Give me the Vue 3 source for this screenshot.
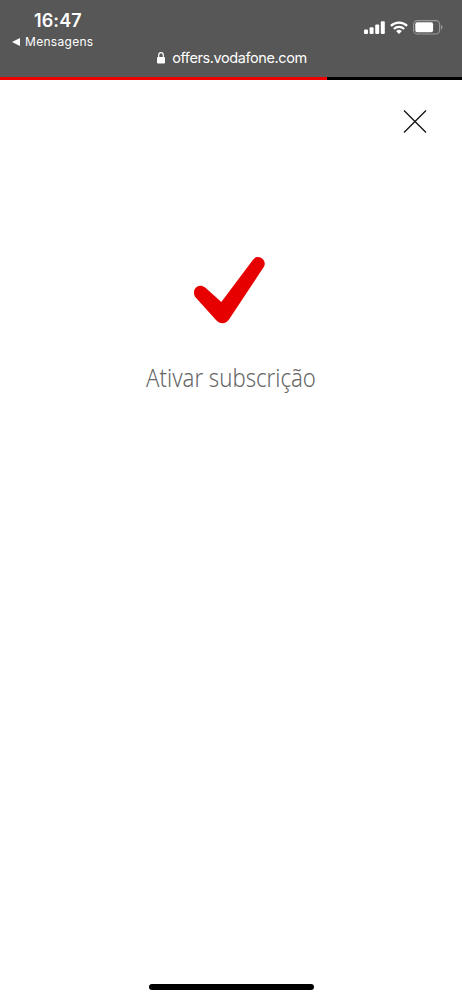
<script setup>
const time = '16:47'
const progress = 70.8
</script>

<template>
  <div class="screen">
    <header class="browser-bar">
      <div class="status">
        <div class="left">
          <div class="time">{{ time }}</div>
          <div class="back">
            <svg width="8" height="8" viewBox="0 0 8 8"><path d="M0 4 8 0V8Z" fill="#fff" /></svg>
            <span>Mensagens</span>
          </div>
        </div>
        <div class="indicators">
          <svg width="21" height="13" viewBox="0 0 21 13" fill="#fff">
            <rect x="0" y="8.5" width="4" height="4.5" rx="1" />
            <rect x="5.6" y="6.3" width="4" height="6.7" rx="1" />
            <rect x="11.2" y="3.6" width="4" height="9.4" rx="1" />
            <rect x="16.8" y="0.2" width="4" height="12.8" rx="1" />
          </svg>
          <svg width="18" height="13" viewBox="0 0 18 13" fill="none" stroke="#fff" stroke-width="2.3">
            <path d="M.9 4.9a11.5 11.5 0 0 1 16.2 0" />
            <path d="M3.9 8a7.2 7.2 0 0 1 10.2 0" />
            <path d="M9 13 6.2 10.2a4 4 0 0 1 5.6 0Z" fill="#fff" stroke="none" />
          </svg>
          <svg width="30" height="15" viewBox="0 0 30 15">
            <rect x=".6" y=".6" width="26" height="13.4" rx="3.8" fill="none" stroke="#999" stroke-width="1.1" />
            <rect x="2.3" y="2.3" width="17.8" height="10" rx="2" fill="#fff" />
            <path d="M28 5c2 .7 2 4 0 4.7Z" fill="#999" />
          </svg>
        </div>
      </div>
      <div class="address">
        <svg width="8" height="12" viewBox="0 0 8 12">
          <rect x="0" y="5" width="8" height="6.5" rx="1" fill="#fff" />
          <path d="M1.7 5.5V3.2a2.3 2.5 0 0 1 4.6 0V5.5" fill="none" stroke="#fff" stroke-width="1.2" />
        </svg>
        <span>offers.vodafone.com</span>
      </div>
    </header>
    <div class="progress"><div class="progress-fill" :style="{ width: progress + '%' }"></div></div>
    <main class="content">
      <button class="close" aria-label="Fechar">
        <svg width="24" height="24" viewBox="0 0 24 24"><path d="M1 .5 23 22.5M23 .5 1 22.5" stroke="#111" stroke-width="1.3" /></svg>
      </button>
      <svg class="check" width="72" height="68" viewBox="0 0 72 68" fill="#e60000">
        <path d="M12.200 31.600 28.300 45.900 60.200 3.400C65.500 -2.800 74.600 4.400 70.900 10.700L36 63.500C31.900 68.800 27 68.200 23.200 64.300L2.700 41.600C-2.400 34.900 4.700 25.800 12.200 31.600Z" />
      </svg>
      <h1>Ativar subscrição</h1>
    </main>
    <div class="home-indicator"></div>
  </div>
</template>

<style>
body { margin: 0; background: #fff; }
</style>

<style scoped>
.screen { display: flex; flex-direction: column; height: 999px; overflow: hidden; background: #fff; font-family: Inter, "Liberation Sans", sans-serif; }
svg { display: block; flex: none; }
.browser-bar { height: 77px; background: #575757; color: #fff; }
.status { display: flex; justify-content: space-between; height: 48px; }
.left { padding: 10px 0 0 12px; }
.time { padding-left: 22px; font-size: 18px; font-weight: 600; line-height: 22px; letter-spacing: .1px; }
.back { display: flex; align-items: center; gap: 5px; margin-top: 2px; font-size: 12px; font-weight: 400; line-height: 15px; letter-spacing: .3px; }
.indicators { display: flex; align-items: center; gap: 5px; height: 15px; padding: 20px 19px 0 0; }
.address { display: flex; justify-content: center; align-items: center; gap: 7px; height: 20px; padding-left: 2px; font-size: 14.5px; line-height: 20px; letter-spacing: -.4px; }
.progress { flex: none; height: 3px; background: #000; }
.progress-fill { height: 3px; background: #ee0000; }
.content { flex: 1; display: flex; flex-direction: column; align-items: center; }
.close { align-self: flex-end; margin: 30px 35px 0 0; padding: 0; border: 0; background: none; }
.check { margin: 122px 0 0 -4px; }
h1 { margin: 35px 0 0; font-family: "Noto Sans", "Open Sans", sans-serif; font-size: 25px; line-height: 36px; font-weight: 300; color: #666; white-space: nowrap; transform: scaleX(.885); }
.home-indicator { flex: none; align-self: center; width: 165px; height: 6px; margin-bottom: 9px; border-radius: 3px; background: #000; }
</style>
